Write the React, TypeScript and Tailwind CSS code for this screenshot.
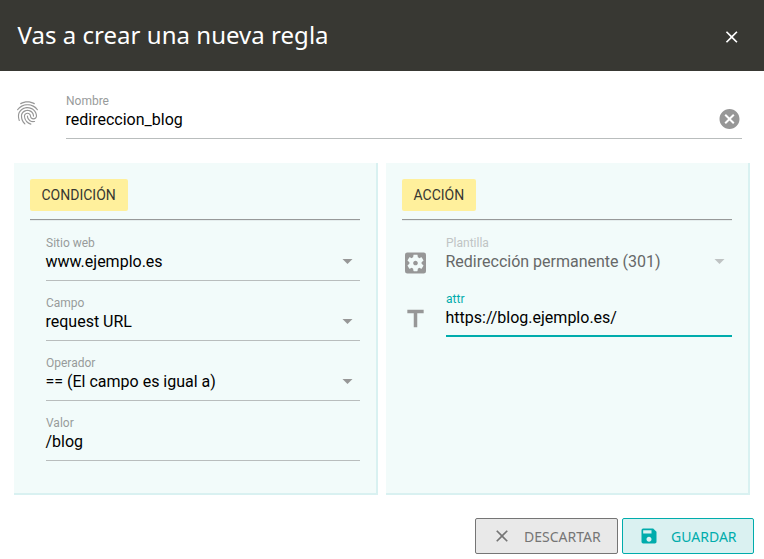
import type { ReactNode } from "react";
import {
  MdArrowDropDown,
  MdCancel,
  MdClose,
  MdFingerprint,
  MdSave,
  MdSettingsApplications,
  MdTitle,
} from "react-icons/md";

type FieldProps = {
  label: string;
  value: string;
  trailing?: ReactNode;
  state?: "normal" | "disabled" | "active";
};

function Field({ label, value, trailing, state = "normal" }: FieldProps) {
  const labelColor =
    state === "active" ? "text-[#00acac]" : state === "disabled" ? "text-[#c0c4c4]" : "text-[#989b9b]";
  const line =
    state === "active"
      ? "border-b-2 border-[#00acac]"
      : state === "disabled"
        ? "border-b border-transparent"
        : "border-b border-[#b9bdbd]";
  return (
    <div className={`flex h-[49px] min-w-0 flex-1 items-start justify-between ${line}`}>
      <div>
        <div className={`pt-[3px] text-xs leading-4 ${labelColor}`}>{label}</div>
        <div className={`-ml-[0.5px] text-base leading-[22px] ${state === "disabled" ? "text-[#666868]" : "text-black"}`}>
          {value}
        </div>
      </div>
      {trailing}
    </div>
  );
}

function Arrow({ faded = false }: { faded?: boolean }) {
  return (
    <MdArrowDropDown
      className={`mt-[17px] size-6 translate-x-[-0.5px] ${faded ? "text-[#bfc3c3]" : "text-[#979797]"}`}
    />
  );
}

function Panel({ title, children }: { title: string; children: ReactNode }) {
  return (
    <section className="h-[332px] w-[364px] border-r-2 border-b-2 border-[#d9f1f1] bg-[#f2fbfa] px-4 pt-4">
      <h2 className="inline-flex h-8 items-center rounded-[2px] bg-[#fff09c] pr-[11.9px] pl-[11.5px] text-sm text-[#373732]">
        {title}
      </h2>
      <div className="mt-2 h-0.5 border-t border-[#979999] bg-[#e5eded]" />
      {children}
    </section>
  );
}

export default function App() {
  return (
    <div className="h-[559px] w-[764px] overflow-hidden bg-white font-['Roboto',sans-serif]">
      <header className="flex h-[71px] items-center justify-between bg-[#383833] pr-[22px] pl-[17.5px] text-white">
        <h1 className="pb-0.5 font-['Noto_Sans',sans-serif] text-2xl tracking-[0.03px]">Vas a crear una nueva regla</h1>
        <MdClose className="mt-[3px] size-5 translate-x-[-0.3px]" />
      </header>

      <div className="flex pt-[19px] pr-[22px] pl-[14px]">
        <MdFingerprint className="mt-[9px] mr-6 size-7 shrink-0 translate-x-[-0.5px] text-[#979797]" />
        <Field
          label="Nombre"
          value="redireccion_blog"
          trailing={<MdCancel className="mt-[17px] size-6 translate-x-[-0.5px] text-[#979797]" />}
        />
      </div>

      <main className="mt-6 flex gap-2 pl-[14px]">
        <Panel title="CONDICIÓN">
          <div className="flex flex-col gap-[11px] pt-[11px] pl-4">
            <div className="flex"><Field label="Sitio web" value="www.ejemplo.es" trailing={<Arrow />} /></div>
            <div className="flex"><Field label="Campo" value="request URL" trailing={<Arrow />} /></div>
            <div className="flex"><Field label="Operador" value="== (El campo es igual a)" trailing={<Arrow />} /></div>
            <div className="flex"><Field label="Valor" value="/blog" /></div>
          </div>
        </Panel>
        <Panel title="ACCIÓN">
          <div className="flex flex-col gap-[7px] pt-[11px]">
            <div className="flex">
              <MdSettingsApplications className="mt-[17px] mr-4 size-7 shrink-0 translate-x-[-0.5px] text-[#979797]" />
              <Field label="Plantilla" value="Redirección permanente (301)" state="disabled" trailing={<Arrow faded />} />
            </div>
            <div className="flex">
              <MdTitle className="mt-[17px] mr-4 size-7 shrink-0 translate-x-[-0.5px] text-[#979797]" />
              <Field label="attr" value="https://blog.ejemplo.es/" state="active" />
            </div>
          </div>
        </Panel>
      </main>

      <footer className="mt-[23px] flex justify-end gap-1 pr-[10px] font-['Noto_Sans',sans-serif] text-sm">
        <button className="flex h-9 w-[143px] items-center rounded-[2px] border border-[#757575] bg-[#e9e9e9] pl-4 text-[#757575]">
          <MdClose className="mr-3 size-5" />
          <span className="pt-0.5">DESCARTAR</span>
        </button>
        <button className="flex h-9 w-[132px] items-center rounded-[2px] border border-[#00acac] bg-[#daf1f1] pl-4 text-[#00acac]">
          <MdSave className="mr-3 size-5" />
          <span className="pt-0.5">GUARDAR</span>
        </button>
      </footer>
    </div>
  );
}
